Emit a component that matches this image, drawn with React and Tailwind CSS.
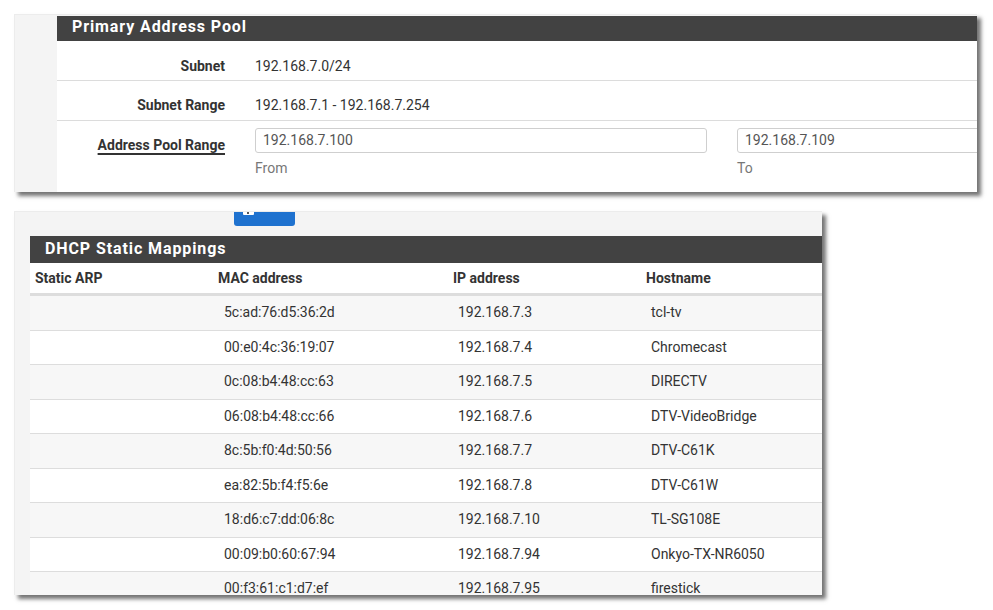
import React from 'react';

const mappings = [
  ['5c:ad:76:d5:36:2d', '192.168.7.3', 'tcl-tv'],
  ['00:e0:4c:36:19:07', '192.168.7.4', 'Chromecast'],
  ['0c:08:b4:48:cc:63', '192.168.7.5', 'DIRECTV'],
  ['06:08:b4:48:cc:66', '192.168.7.6', 'DTV-VideoBridge'],
  ['8c:5b:f0:4d:50:56', '192.168.7.7', 'DTV-C61K'],
  ['ea:82:5b:f4:f5:6e', '192.168.7.8', 'DTV-C61W'],
  ['18:d6:c7:dd:06:8c', '192.168.7.10', 'TL-SG108E'],
  ['00:09:b0:60:67:94', '192.168.7.94', 'Onkyo-TX-NR6050'],
  ['00:f3:61:c1:d7:ef', '192.168.7.95', 'firestick'],
];

const cardShadow = 'shadow-[4px_4px_4px_rgba(0,0,0,0.55)]';

const App = () => {
  return (
    <div className="w-[993px] h-[610px] overflow-hidden bg-white pt-[14px] pl-[14px] font-['Roboto',sans-serif] text-[#333]">
      {/* Primary Address Pool */}
      <div className={`w-[963px] h-[178px] bg-[#f4f4f4] pl-[42px] pt-px overflow-hidden border-t border-l border-[#ececec] ${cardShadow}`}>
        <div className="h-full bg-white">
          <div className="h-[25px] bg-[#424242] pl-[15px] text-white font-bold text-[16px] leading-[22px] tracking-[0.9px]">
            Primary Address Pool
          </div>

          <div className="flex h-[40px] pt-[15px] border-b border-[#dcdcdc] text-[14px] leading-[20px]">
            <div className="w-[168px] shrink-0 text-right font-bold">Subnet</div>
            <div className="pl-[30px]">192.168.7.0/24</div>
          </div>

          <div className="flex h-[40px] pt-[14px] border-b border-[#dcdcdc] text-[14px] leading-[20px]">
            <div className="w-[168px] shrink-0 text-right font-bold">Subnet Range</div>
            <div className="pl-[30px]">192.168.7.1 - 192.168.7.254</div>
          </div>

          <div className="flex pt-[7px] text-[14px] leading-[20px]">
            <div className="w-[168px] shrink-0 text-right font-bold pt-[7px]">
              <span className="underline underline-offset-[3px] decoration-[1.5px]">Address Pool Range</span>
            </div>
            <div className="pl-[30px] flex gap-[30px] shrink-0">
              <div className="w-[452px]">
                <div className="h-[25px] border border-[#cfcfcf] rounded-[3px] pl-[7px] leading-[22px] text-[#555]">192.168.7.100</div>
                <div className="pt-[5px] text-[#777]">From</div>
              </div>
              <div className="w-[452px]">
                <div className="h-[25px] border border-[#cfcfcf] rounded-[3px] pl-[7px] leading-[22px] text-[#555]">192.168.7.109</div>
                <div className="pt-[5px] text-[#777]">To</div>
              </div>
            </div>
          </div>
        </div>
      </div>

      {/* DHCP Static Mappings */}
      <div className={`relative mt-[19px] w-[808px] h-[384px] bg-[#f4f4f4] pl-[15px] pt-[24px] overflow-hidden border-t border-l border-[#ececec] ${cardShadow}`}>
        <div className="absolute left-[219px] top-0 w-[61px] h-[14px] bg-[#1f72cf] rounded-b-[3px]">
          <div className="absolute left-[9px] top-0 w-[11px] h-[3px] bg-white rounded-b-[1px]">
            <div className="absolute left-[4px] top-0 w-[2px] h-[2px] bg-[#555]" />
          </div>
        </div>

        <div className="bg-white h-full">
          <div className="h-[27px] bg-[#424242] pl-[15px] text-white font-bold text-[16px] leading-[26px] tracking-[0.9px]">
            DHCP Static Mappings
          </div>

          <div className="grid grid-cols-[183px_235px_193px_1fr] h-[32px] pt-px items-center border-b-2 border-[#dddddd] font-bold text-[14px]">
            <div className="pl-[5px]">Static ARP</div>
            <div className="pl-[5px]">MAC address</div>
            <div className="pl-[5px]">IP address</div>
            <div className="pl-[5px]">Hostname</div>
          </div>

          {mappings.map(([mac, ip, host], i) => (
            <div
              key={mac}
              className={`grid grid-cols-[183px_235px_193px_1fr] h-[34.5px] items-center border-t border-[#dddddd] text-[14px] first:border-t-0 ${
                i % 2 === 0 ? 'bg-[#f7f7f7]' : 'bg-white'
              }`}
            >
              <div />
              <div className="pl-[11px]">{mac}</div>
              <div className="pl-[10px]">{ip}</div>
              <div className="pl-[10px]">{host}</div>
            </div>
          ))}
        </div>
      </div>
    </div>
  );
};

export default App;
